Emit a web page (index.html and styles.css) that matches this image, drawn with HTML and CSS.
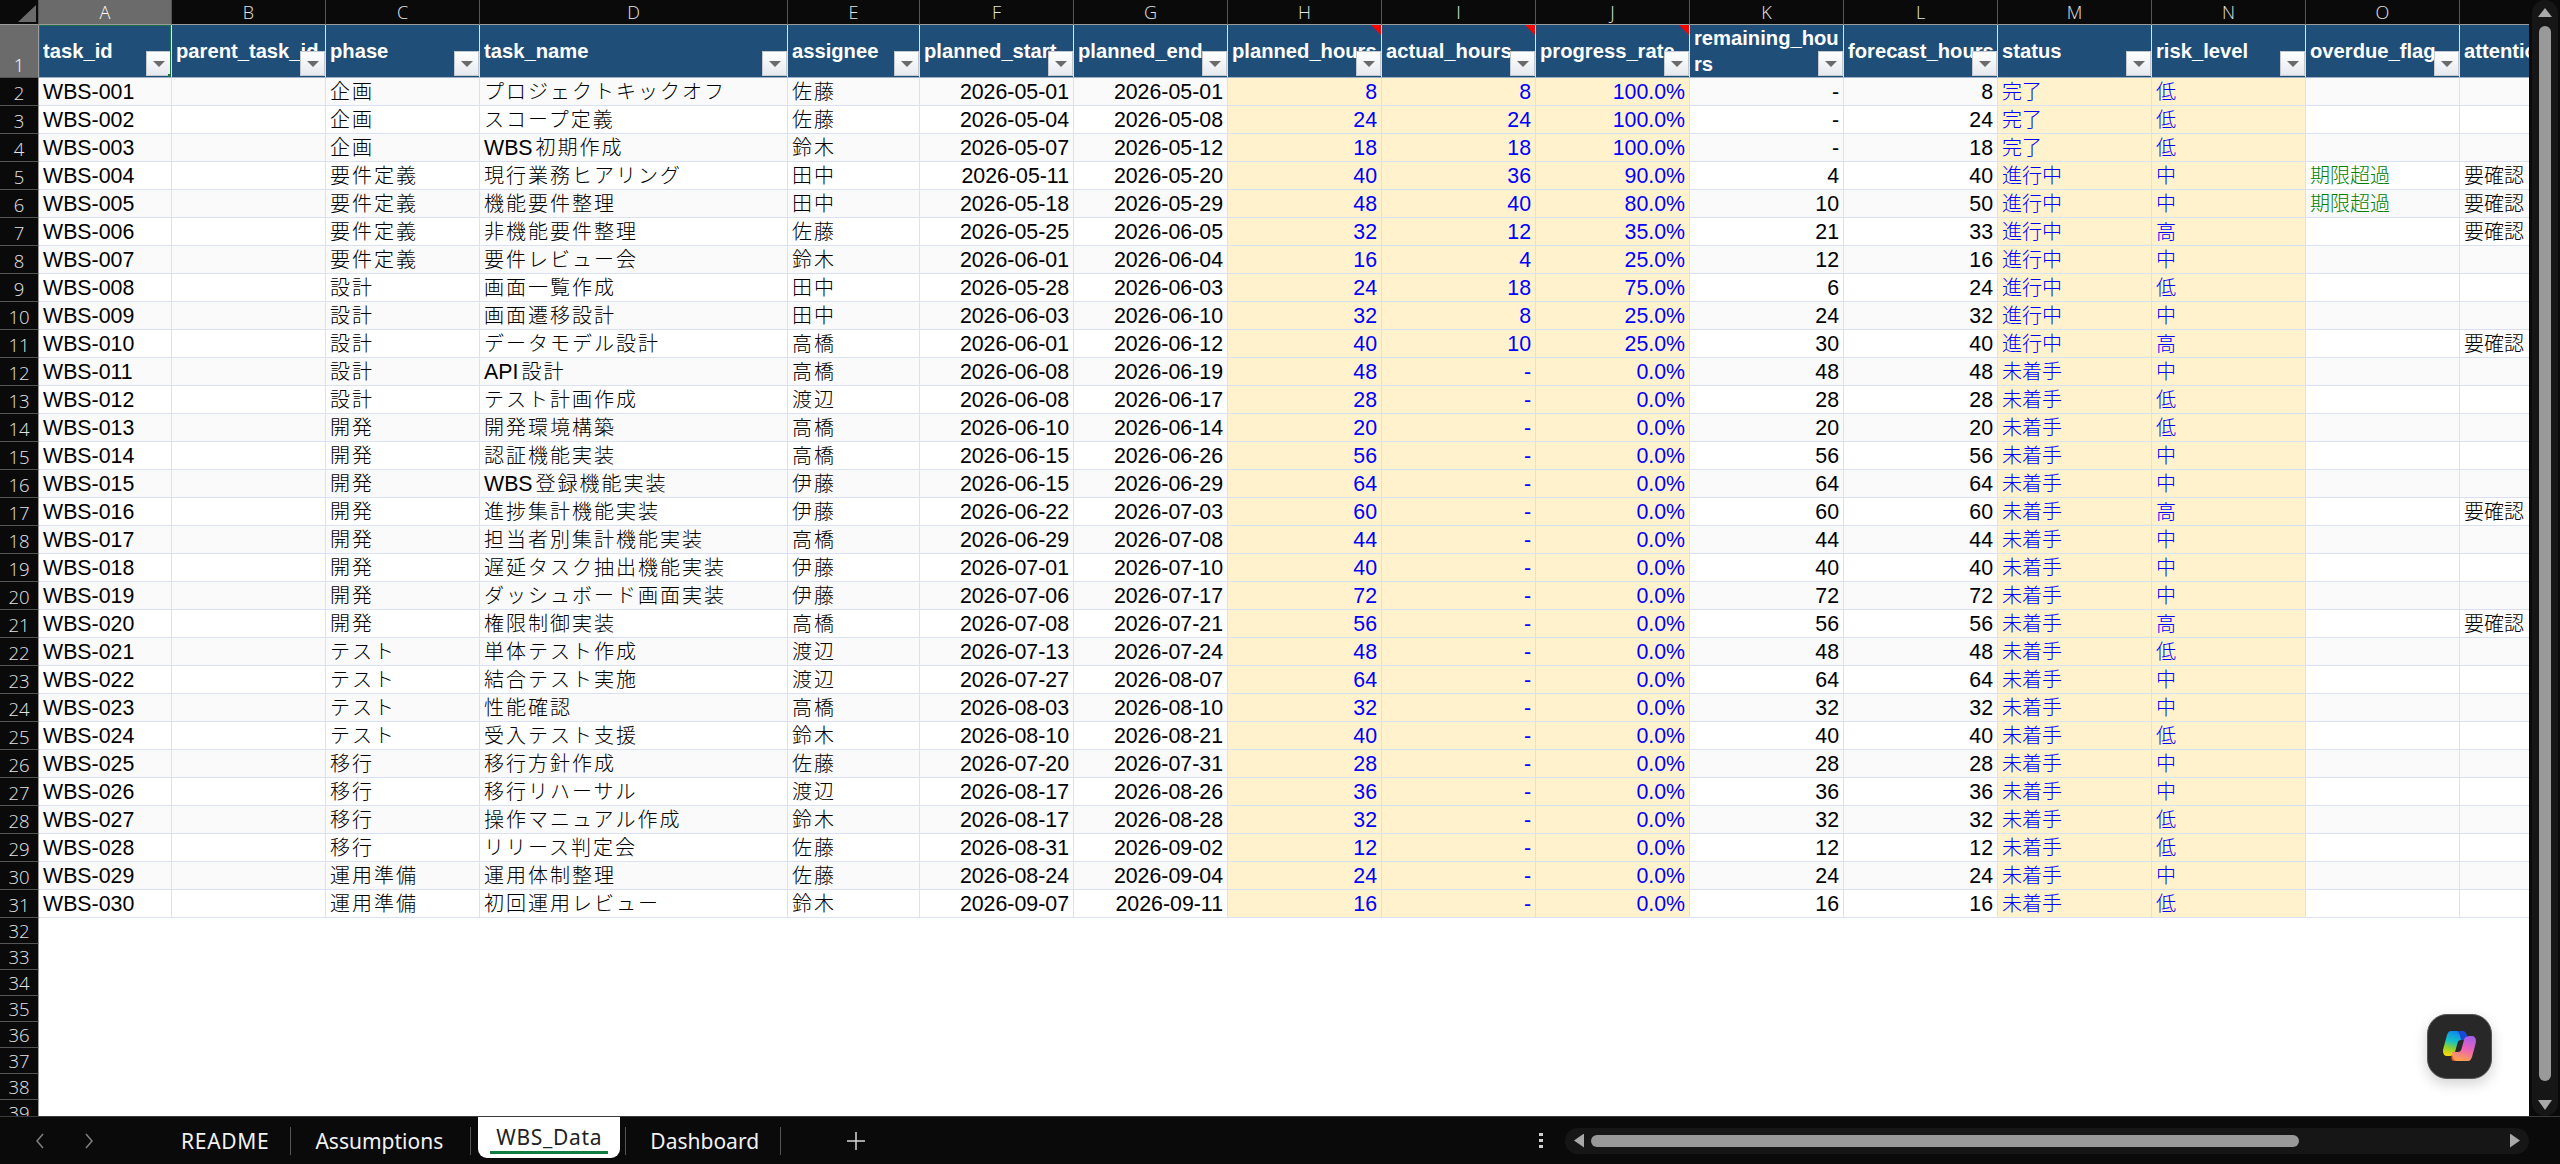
FILE: index.html
```html
<!DOCTYPE html>
<html lang="ja">
<head>
    <meta charset="UTF-8">
    <meta name="viewport" content="width=device-width, initial-scale=1.0">
    <title>WBS_Data</title>
    <link rel="stylesheet" href="styles.css">
</head>
<body>
<div class="app">
    <div class="work-area">
        <div class="grid-wrap">
            <table class="sheet">
                <colgroup>
                    <col class="w-head"><col class="w-a"><col class="w-std"><col class="w-std"><col class="w-d"><col class="w-e">
                    <col class="w-std"><col class="w-std"><col class="w-std"><col class="w-std"><col class="w-std"><col class="w-std">
                    <col class="w-std"><col class="w-std"><col class="w-std"><col class="w-std"><col class="w-std">
                </colgroup>
                <thead>
                    <tr>
                        <th class="corner"><span class="corner-mark"></span></th>
                        <th class="selected">A</th><th>B</th><th>C</th><th>D</th><th>E</th><th>F</th><th>G</th><th>H</th><th>I</th><th>J</th><th>K</th><th>L</th><th>M</th><th>N</th><th>O</th><th>P</th>
                    </tr>
                </thead>
                <tbody>
                    <tr class="fields">
                        <th class="selected">1</th>
                        <td class="active-cell">task_id<span class="filter"></span></td>
                        <td>parent_task_id<span class="filter"></span></td>
                        <td>phase<span class="filter"></span></td>
                        <td>task_name<span class="filter"></span></td>
                        <td>assignee<span class="filter"></span></td>
                        <td>planned_start<span class="filter"></span></td>
                        <td>planned_end<span class="filter"></span></td>
                        <td class="noted">planned_hours<span class="filter"></span></td>
                        <td class="noted">actual_hours<span class="filter"></span></td>
                        <td class="noted">progress_rate<span class="filter"></span></td>
                        <td class="two-line">remaining_hou<br>rs<span class="filter"></span></td>
                        <td>forecast_hours<span class="filter"></span></td>
                        <td>status<span class="filter"></span></td>
                        <td>risk_level<span class="filter"></span></td>
                        <td>overdue_flag<span class="filter"></span></td>
                        <td>attention<span class="filter"></span></td>
                    </tr>
                    <tr><th>2</th><td>WBS-001</td><td></td><td>企画</td><td>プロジェクトキックオフ</td><td>佐藤</td><td>2026-05-01</td><td>2026-05-01</td><td>8</td><td>8</td><td>100.0%</td><td>-</td><td>8</td><td>完了</td><td>低</td><td></td><td></td></tr>
                    <tr><th>3</th><td>WBS-002</td><td></td><td>企画</td><td>スコープ定義</td><td>佐藤</td><td>2026-05-04</td><td>2026-05-08</td><td>24</td><td>24</td><td>100.0%</td><td>-</td><td>24</td><td>完了</td><td>低</td><td></td><td></td></tr>
                    <tr><th>4</th><td>WBS-003</td><td></td><td>企画</td><td><span class="latin">WBS</span>初期作成</td><td>鈴木</td><td>2026-05-07</td><td>2026-05-12</td><td>18</td><td>18</td><td>100.0%</td><td>-</td><td>18</td><td>完了</td><td>低</td><td></td><td></td></tr>
                    <tr><th>5</th><td>WBS-004</td><td></td><td>要件定義</td><td>現行業務ヒアリング</td><td>田中</td><td>2026-05-11</td><td>2026-05-20</td><td>40</td><td>36</td><td>90.0%</td><td>4</td><td>40</td><td>進行中</td><td>中</td><td>期限超過</td><td>要確認</td></tr>
                    <tr><th>6</th><td>WBS-005</td><td></td><td>要件定義</td><td>機能要件整理</td><td>田中</td><td>2026-05-18</td><td>2026-05-29</td><td>48</td><td>40</td><td>80.0%</td><td>10</td><td>50</td><td>進行中</td><td>中</td><td>期限超過</td><td>要確認</td></tr>
                    <tr><th>7</th><td>WBS-006</td><td></td><td>要件定義</td><td>非機能要件整理</td><td>佐藤</td><td>2026-05-25</td><td>2026-06-05</td><td>32</td><td>12</td><td>35.0%</td><td>21</td><td>33</td><td>進行中</td><td>高</td><td></td><td>要確認</td></tr>
                    <tr><th>8</th><td>WBS-007</td><td></td><td>要件定義</td><td>要件レビュー会</td><td>鈴木</td><td>2026-06-01</td><td>2026-06-04</td><td>16</td><td>4</td><td>25.0%</td><td>12</td><td>16</td><td>進行中</td><td>中</td><td></td><td></td></tr>
                    <tr><th>9</th><td>WBS-008</td><td></td><td>設計</td><td>画面一覧作成</td><td>田中</td><td>2026-05-28</td><td>2026-06-03</td><td>24</td><td>18</td><td>75.0%</td><td>6</td><td>24</td><td>進行中</td><td>低</td><td></td><td></td></tr>
                    <tr><th>10</th><td>WBS-009</td><td></td><td>設計</td><td>画面遷移設計</td><td>田中</td><td>2026-06-03</td><td>2026-06-10</td><td>32</td><td>8</td><td>25.0%</td><td>24</td><td>32</td><td>進行中</td><td>中</td><td></td><td></td></tr>
                    <tr><th>11</th><td>WBS-010</td><td></td><td>設計</td><td>データモデル設計</td><td>高橋</td><td>2026-06-01</td><td>2026-06-12</td><td>40</td><td>10</td><td>25.0%</td><td>30</td><td>40</td><td>進行中</td><td>高</td><td></td><td>要確認</td></tr>
                    <tr><th>12</th><td>WBS-011</td><td></td><td>設計</td><td><span class="latin">API</span>設計</td><td>高橋</td><td>2026-06-08</td><td>2026-06-19</td><td>48</td><td>-</td><td>0.0%</td><td>48</td><td>48</td><td>未着手</td><td>中</td><td></td><td></td></tr>
                    <tr><th>13</th><td>WBS-012</td><td></td><td>設計</td><td>テスト計画作成</td><td>渡辺</td><td>2026-06-08</td><td>2026-06-17</td><td>28</td><td>-</td><td>0.0%</td><td>28</td><td>28</td><td>未着手</td><td>低</td><td></td><td></td></tr>
                    <tr><th>14</th><td>WBS-013</td><td></td><td>開発</td><td>開発環境構築</td><td>高橋</td><td>2026-06-10</td><td>2026-06-14</td><td>20</td><td>-</td><td>0.0%</td><td>20</td><td>20</td><td>未着手</td><td>低</td><td></td><td></td></tr>
                    <tr><th>15</th><td>WBS-014</td><td></td><td>開発</td><td>認証機能実装</td><td>高橋</td><td>2026-06-15</td><td>2026-06-26</td><td>56</td><td>-</td><td>0.0%</td><td>56</td><td>56</td><td>未着手</td><td>中</td><td></td><td></td></tr>
                    <tr><th>16</th><td>WBS-015</td><td></td><td>開発</td><td><span class="latin">WBS</span>登録機能実装</td><td>伊藤</td><td>2026-06-15</td><td>2026-06-29</td><td>64</td><td>-</td><td>0.0%</td><td>64</td><td>64</td><td>未着手</td><td>中</td><td></td><td></td></tr>
                    <tr><th>17</th><td>WBS-016</td><td></td><td>開発</td><td>進捗集計機能実装</td><td>伊藤</td><td>2026-06-22</td><td>2026-07-03</td><td>60</td><td>-</td><td>0.0%</td><td>60</td><td>60</td><td>未着手</td><td>高</td><td></td><td>要確認</td></tr>
                    <tr><th>18</th><td>WBS-017</td><td></td><td>開発</td><td>担当者別集計機能実装</td><td>高橋</td><td>2026-06-29</td><td>2026-07-08</td><td>44</td><td>-</td><td>0.0%</td><td>44</td><td>44</td><td>未着手</td><td>中</td><td></td><td></td></tr>
                    <tr><th>19</th><td>WBS-018</td><td></td><td>開発</td><td>遅延タスク抽出機能実装</td><td>伊藤</td><td>2026-07-01</td><td>2026-07-10</td><td>40</td><td>-</td><td>0.0%</td><td>40</td><td>40</td><td>未着手</td><td>中</td><td></td><td></td></tr>
                    <tr><th>20</th><td>WBS-019</td><td></td><td>開発</td><td>ダッシュボード画面実装</td><td>伊藤</td><td>2026-07-06</td><td>2026-07-17</td><td>72</td><td>-</td><td>0.0%</td><td>72</td><td>72</td><td>未着手</td><td>中</td><td></td><td></td></tr>
                    <tr><th>21</th><td>WBS-020</td><td></td><td>開発</td><td>権限制御実装</td><td>高橋</td><td>2026-07-08</td><td>2026-07-21</td><td>56</td><td>-</td><td>0.0%</td><td>56</td><td>56</td><td>未着手</td><td>高</td><td></td><td>要確認</td></tr>
                    <tr><th>22</th><td>WBS-021</td><td></td><td>テスト</td><td>単体テスト作成</td><td>渡辺</td><td>2026-07-13</td><td>2026-07-24</td><td>48</td><td>-</td><td>0.0%</td><td>48</td><td>48</td><td>未着手</td><td>低</td><td></td><td></td></tr>
                    <tr><th>23</th><td>WBS-022</td><td></td><td>テスト</td><td>結合テスト実施</td><td>渡辺</td><td>2026-07-27</td><td>2026-08-07</td><td>64</td><td>-</td><td>0.0%</td><td>64</td><td>64</td><td>未着手</td><td>中</td><td></td><td></td></tr>
                    <tr><th>24</th><td>WBS-023</td><td></td><td>テスト</td><td>性能確認</td><td>高橋</td><td>2026-08-03</td><td>2026-08-10</td><td>32</td><td>-</td><td>0.0%</td><td>32</td><td>32</td><td>未着手</td><td>中</td><td></td><td></td></tr>
                    <tr><th>25</th><td>WBS-024</td><td></td><td>テスト</td><td>受入テスト支援</td><td>鈴木</td><td>2026-08-10</td><td>2026-08-21</td><td>40</td><td>-</td><td>0.0%</td><td>40</td><td>40</td><td>未着手</td><td>低</td><td></td><td></td></tr>
                    <tr><th>26</th><td>WBS-025</td><td></td><td>移行</td><td>移行方針作成</td><td>佐藤</td><td>2026-07-20</td><td>2026-07-31</td><td>28</td><td>-</td><td>0.0%</td><td>28</td><td>28</td><td>未着手</td><td>中</td><td></td><td></td></tr>
                    <tr><th>27</th><td>WBS-026</td><td></td><td>移行</td><td>移行リハーサル</td><td>渡辺</td><td>2026-08-17</td><td>2026-08-26</td><td>36</td><td>-</td><td>0.0%</td><td>36</td><td>36</td><td>未着手</td><td>中</td><td></td><td></td></tr>
                    <tr><th>28</th><td>WBS-027</td><td></td><td>移行</td><td>操作マニュアル作成</td><td>鈴木</td><td>2026-08-17</td><td>2026-08-28</td><td>32</td><td>-</td><td>0.0%</td><td>32</td><td>32</td><td>未着手</td><td>低</td><td></td><td></td></tr>
                    <tr><th>29</th><td>WBS-028</td><td></td><td>移行</td><td>リリース判定会</td><td>佐藤</td><td>2026-08-31</td><td>2026-09-02</td><td>12</td><td>-</td><td>0.0%</td><td>12</td><td>12</td><td>未着手</td><td>低</td><td></td><td></td></tr>
                    <tr><th>30</th><td>WBS-029</td><td></td><td>運用準備</td><td>運用体制整理</td><td>佐藤</td><td>2026-08-24</td><td>2026-09-04</td><td>24</td><td>-</td><td>0.0%</td><td>24</td><td>24</td><td>未着手</td><td>中</td><td></td><td></td></tr>
                    <tr><th>31</th><td>WBS-030</td><td></td><td>運用準備</td><td>初回運用レビュー</td><td>鈴木</td><td>2026-09-07</td><td>2026-09-11</td><td>16</td><td>-</td><td>0.0%</td><td>16</td><td>16</td><td>未着手</td><td>低</td><td></td><td></td></tr>
                    <tr class="blank"><th>32</th></tr>
                    <tr class="blank"><th>33</th></tr>
                    <tr class="blank"><th>34</th></tr>
                    <tr class="blank"><th>35</th></tr>
                    <tr class="blank"><th>36</th></tr>
                    <tr class="blank"><th>37</th></tr>
                    <tr class="blank"><th>38</th></tr>
                    <tr class="blank"><th>39</th></tr>
                </tbody>
            </table>
            <button class="copilot" type="button" aria-label="Copilot">
                <svg width="34" height="31" viewBox="0 0 34 31">
                    <defs>
                        <linearGradient id="ribbonLeft" x1="0.6" y1="0" x2="0.3" y2="1">
                            <stop offset="0" stop-color="#0d84f2"/>
                            <stop offset="0.45" stop-color="#18c3c4"/>
                            <stop offset="0.72" stop-color="#8fd12e"/>
                            <stop offset="1" stop-color="#f7d80c"/>
                        </linearGradient>
                        <linearGradient id="ribbonRight" x1="0.7" y1="0" x2="0.4" y2="1">
                            <stop offset="0" stop-color="#a45fea"/>
                            <stop offset="0.5" stop-color="#ea62b8"/>
                            <stop offset="1" stop-color="#ffa24c"/>
                        </linearGradient>
                    </defs>
                    <path d="M9 21H17L16 25C15.5 28 14 30 11 30C9 30 8 28 8.5 25Z" fill="#f2573a"/>
                    <path d="M8 0H19C22 0 24 3 25 9H18C16 9 15 10 14.5 12L12 21C11.5 24 9 25 6 25H4C1.5 25 0 23 0 20C0 19 .5 17 1 15L4 4C5 1.5 6 0 8 0Z" fill="url(#ribbonLeft)"/>
                    <path d="M14 0H19C22 0 24 3 25 9H18C17 4 16 1 14 0Z" fill="#1b49d6"/>
                    <path d="M25 30H14C11 30 9.500 27 9 21H15C17 21 18 20 18.500 18L21 9C21.500 6 24 5 27 5H29C31.500 5 33 7 33 10C33 11 32.500 13 32 15L29 26C28 28.500 27 30 25 30Z" fill="url(#ribbonRight)"/>
                </svg>
            </button>
        </div>
        <div class="vscroll">
            <div class="vtrack">
                <span class="arrow-up"></span>
                <span class="vthumb"></span>
                <span class="arrow-down"></span>
            </div>
        </div>
    </div>
    <div class="tabbar">
        <div class="sheet-nav">
            <svg width="10" height="18" viewBox="0 0 10 18"><path d="M8 2 2 9l6 7" fill="none" stroke="#808080" stroke-width="1.500"/></svg>
            <svg width="10" height="18" viewBox="0 0 10 18"><path d="M2 2l6 7-6 7" fill="none" stroke="#808080" stroke-width="1.500"/></svg>
        </div>
        <div class="tab readme">README</div>
        <div class="tab before-active">Assumptions</div>
        <div class="tab active"><span>WBS_Data</span></div>
        <div class="tab">Dashboard</div>
        <svg class="add-sheet" width="20" height="20" viewBox="0 0 20 20"><path d="M10 1v18M1 10h18" stroke="#d8d8d8" stroke-width="1.500"/></svg>
        <svg class="kebab" width="4" height="16" viewBox="0 0 4 16"><path d="M0 0h4v3H0zM0 6h4v3H0zM0 12h4v3H0z" fill="#d0d0d0"/></svg>
        <div class="hscroll">
            <span class="arrow-left"></span>
            <span class="hthumb"></span>
            <span class="arrow-right"></span>
        </div>
    </div>
</div>
</body>
</html>
```

FILE: styles.css
```css
html, body {
    margin: 0;
    height: 100%;
    overflow: hidden;
    background: #0a0a0a;
}

.app {
    display: flex;
    flex-direction: column;
    height: 1164px;
    font-family: "Liberation Sans", "Noto Sans CJK JP", sans-serif;
}

.work-area {
    display: flex;
    height: 1116px;
}

.grid-wrap {
    position: relative;
    width: 2529px;
    overflow: hidden;
    background: #fff;
}

/* table */
.sheet {
    table-layout: fixed;
    width: 2501px;
    border-collapse: separate;
    border-spacing: 0;
}

.w-head { width: 39px; }
.w-a { width: 133px; }
.w-std { width: 154px; }
.w-d { width: 308px; }
.w-e { width: 132px; }

.sheet thead th {
    box-sizing: border-box;
    height: 25px;
    padding: 0;
    background: #0a0a0a;
    color: #e4e4e4;
    font-family: "Open Sans", sans-serif;
    font-size: 18px;
    font-weight: 300;
    line-height: 24px;
    border-right: 1px solid #555;
    border-bottom: 1px solid #9c9c9c;
}

.sheet thead th.selected {
    background: #6b6b6b;
    color: #fff;
}

.corner {
    position: relative;
}

.corner-mark {
    position: absolute;
    left: 18px;
    top: 5px;
    width: 18px;
    height: 17px;
    background: #6b6b6b;
    clip-path: polygon(100% 0, 100% 100%, 0 100%);
}

/* row numbers */
.sheet tbody th {
    box-sizing: border-box;
    height: 28px;
    padding: 0;
    background: #0a0a0a;
    color: #e4e4e4;
    font-family: "Open Sans", sans-serif;
    font-size: 18.5px;
    font-weight: 300;
    line-height: 24px;
    vertical-align: bottom;
    text-align: center;
    border-right: 1px solid #9c9c9c;
    border-bottom: 1px solid #555;
}

.sheet tbody tr.fields th {
    height: 52px;
    background: #6b6b6b;
    color: #fff;
}

.sheet tbody tr.blank th {
    height: 26px;
}

/* data cells */
.sheet td {
    box-sizing: border-box;
    height: 28px;
    padding: 0 4px;
    overflow: hidden;
    white-space: nowrap;
    color: #000;
    font-size: 21.33px;
    line-height: 24px;
    border-right: 1px solid #d9e1f2;
    border-bottom: 1px solid #d9e1f2;
}

.sheet tbody tr:nth-child(even) td {
    background: #fafafa;
}

/* right aligned columns: dates and numbers */
.sheet td:nth-child(n+7):nth-child(-n+13) {
    text-align: right;
}

/* japanese text columns */
.sheet td:nth-child(4),
.sheet td:nth-child(5),
.sheet td:nth-child(6) {
    font-size: 20px;
    letter-spacing: 2px;
    font-weight: 300;
}

.sheet td:nth-child(14),
.sheet td:nth-child(15),
.sheet td:nth-child(16),
.sheet td:nth-child(17) {
    font-size: 20px;
    font-weight: 300;
}

.latin {
    font-size: 21.33px;
    font-weight: 400;
    letter-spacing: 0;
    margin-right: 3px;
}

/* input columns */
.sheet tbody tr td:nth-child(9),
.sheet tbody tr td:nth-child(10),
.sheet tbody tr td:nth-child(11),
.sheet tbody tr td:nth-child(14),
.sheet tbody tr td:nth-child(15) {
    background: #fff2cc;
    color: #0000ff;
}

.sheet td:nth-child(16) {
    color: #008000;
}

/* header row, repeated selectors keep it above the column rules */
.sheet tbody tr.fields td,
.sheet tbody tr.fields td:nth-child(n) {
    position: relative;
    height: 52px;
    padding: 0 3px 0 4px;
    background: #1f4e78;
    color: #fff;
    font-size: 20.2px;
    font-weight: 700;
    letter-spacing: 0;
    text-align: left;
    line-height: 26px;
    border-bottom-color: #9fb0c4;
}

.active-cell::after {
    content: "";
    position: absolute;
    inset: -1px -1px -2px -1px;
    border: 2px solid #1e7145;
}

.active-cell::before {
    content: "";
    position: absolute;
    right: -3px;
    bottom: -3px;
    width: 6px;
    height: 6px;
    background: #1e7145;
    z-index: 2;
}

.filter {
    position: absolute;
    right: 0;
    bottom: 1px;
    box-sizing: border-box;
    width: 25px;
    height: 25px;
    background: linear-gradient(#ffffff, #e6e9ee);
    border: 1px solid #c4c8cf;
}

.filter::after {
    content: "";
    position: absolute;
    left: 6px;
    top: 9px;
    border-left: 6px solid transparent;
    border-right: 6px solid transparent;
    border-top: 6px solid #6a6a6a;
}

.noted::after {
    content: "";
    position: absolute;
    top: 0;
    right: 0;
    width: 10px;
    height: 10px;
    background: #ff0000;
    clip-path: polygon(0 0, 100% 0, 100% 100%);
}

/* copilot button */
.copilot {
    position: absolute;
    right: 37px;
    bottom: 37px;
    display: flex;
    align-items: center;
    justify-content: center;
    width: 65px;
    height: 65px;
    padding: 0;
    background: #282828;
    border: 1px solid #555;
    border-radius: 20px;
    box-shadow: 0 5px 14px rgba(0, 0, 0, 0.18);
}

/* vertical scrollbar */
.vscroll {
    width: 31px;
    background: #0a0a0a;
}

.vtrack {
    display: flex;
    flex-direction: column;
    align-items: center;
    height: 100%;
    margin: 0 2px 0 3px;
    background: #161616;
    border-radius: 13px;
}

.arrow-up {
    width: 14px;
    height: 9px;
    margin-top: 8px;
    background: #a8a8a8;
    clip-path: polygon(50% 0, 100% 100%, 0 100%);
}

.vthumb {
    width: 12px;
    height: 1055px;
    margin-top: 9px;
    background: #999;
    border-radius: 6px;
}

.arrow-down {
    width: 14px;
    height: 10px;
    margin-top: 19px;
    background: #a8a8a8;
    clip-path: polygon(0 0, 100% 0, 50% 100%);
}

/* sheet tabs */
.tabbar {
    box-sizing: border-box;
    display: flex;
    align-items: center;
    height: 48px;
    background: #0a0a0a;
    border-top: 1px solid #3a3a3a;
    font-family: "Noto Sans", sans-serif;
    font-size: 21px;
    color: #f2f2f2;
}

.sheet-nav {
    display: flex;
    gap: 39px;
    width: 122px;
    padding-left: 35px;
}

.tab {
    height: 28px;
    padding: 0 21px 0 24px;
    line-height: 28px;
    border-right: 1px solid #555;
    white-space: nowrap;
}

.tab.readme {
    letter-spacing: 0.7px;
}

.tab.before-active {
    padding-right: 27px;
    margin-right: 7px;
}

.tab.active {
    align-self: flex-start;
    display: flex;
    height: 41px;
    padding: 0 12px;
    background: #fff;
    color: #222;
    letter-spacing: 0.7px;
    border-right: 0;
    border-radius: 0 0 9px 9px;
}

.tab.active span {
    height: 29px;
    padding: 0 6px;
    margin-top: 5px;
    line-height: 30px;
    border-bottom: 3px solid #107c41;
}

.tab.active + .tab {
    margin-left: 5px;
    border-left: 1px solid #555;
}

.add-sheet {
    margin-left: 65px;
}

.kebab {
    margin-left: auto;
}

/* horizontal scrollbar */
.hscroll {
    display: flex;
    align-items: center;
    box-sizing: border-box;
    width: 964px;
    height: 26px;
    margin: 0 31px 0 22px;
    padding: 0 9px;
    background: #161616;
    border-radius: 13px;
}

.arrow-left {
    width: 10px;
    height: 14px;
    background: #a8a8a8;
    clip-path: polygon(100% 0, 100% 100%, 0 50%);
}

.hthumb {
    width: 708px;
    height: 12px;
    margin-left: 7px;
    background: #999;
    border-radius: 6px;
}

.arrow-right {
    width: 10px;
    height: 14px;
    margin-left: auto;
    background: #a8a8a8;
    clip-path: polygon(0 0, 100% 50%, 0 100%);
}
```
